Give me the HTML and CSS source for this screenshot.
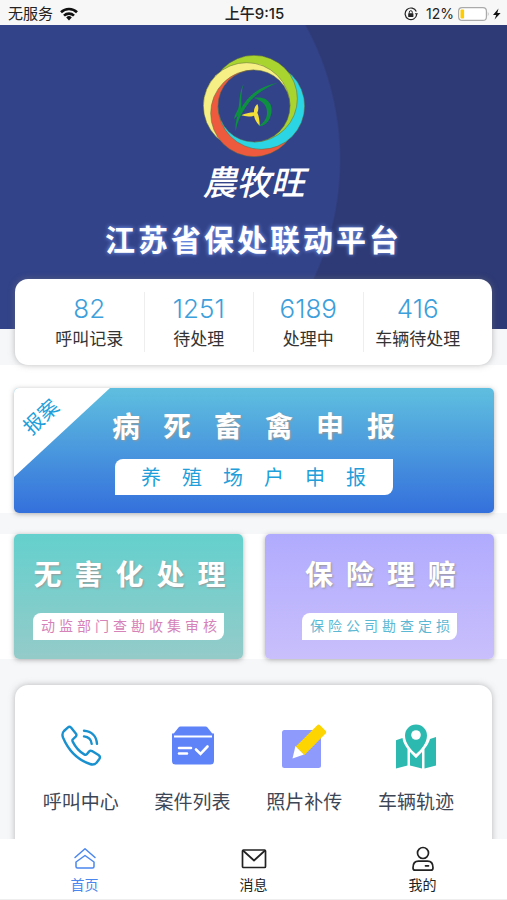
FILE: index.html
```
<!DOCTYPE html>
<html lang="zh-CN">
<head>
    <meta charset="utf-8">
    <meta name="viewport" content="width=device-width, initial-scale=1">
    <title>江苏省保处联动平台</title>
    <link rel="stylesheet" href="styles.css">
</head>

<body>
<div class="status">
    <div class="status-left">
        <span>无服务</span>
        <svg width="18" height="14" viewBox="0 0 18 14">
            <g fill="none" stroke="#111" stroke-width="2.6">
                <path d="M1 5.3a11.4 11.4 0 0 1 16 0"/>
                <path d="M4 8.6a7.2 7.2 0 0 1 10 0"/>
            </g>
            <path d="M9 13.4l-2.8-3a4 4 0 0 1 5.6 0z" fill="#111"/>
        </svg>
    </div>
    <div class="status-time">上午9:15</div>
    <div class="status-right">
        <svg width="14" height="14" viewBox="0 0 14 14">
            <path d="M12.7 7.5A5.8 5.8 0 1 1 12.3 4.6" fill="none" stroke="#222" stroke-width="1.2"/>
            <path d="M10.8 6.2h3.2l-1.5 2.3z" fill="#222"/>
            <rect x="4.2" y="6.3" width="5.2" height="3.8" rx=".5" fill="#222"/>
            <path d="M5.3 6.5V5.2a1.500 1.500 0 0 1 3 0v1.300" fill="none" stroke="#222"/>
        </svg>
        <span class="percent">12%</span>
        <svg width="43" height="14" viewBox="0 0 43 14">
            <rect x=".6" y=".6" width="27.8" height="12.8" rx="3.5" fill="#fff" stroke="#aaa" stroke-width="1.2"/>
            <rect x="2.5" y="2.5" width="3.6" height="9" rx="1" fill="#fc0"/>
            <path d="M29.8 4.6q1.6 2.4 0 4.8z" fill="#aaa"/>
            <path d="M40.5 1.5L35 8h3.2L36.6 12.6 42.6 6h-3.3z" fill="#111"/>
        </svg>
    </div>
</div>

<main class="content">
    <div class="hero">
        <svg class="logo" width="102" height="102" viewBox="0 0 306 306">
            <defs>
                <clipPath id="top"><rect width="306" height="153"/></clipPath>
                <clipPath id="topleft"><rect width="153" height="153"/></clipPath>
                <clipPath id="topright"><path d="M0 0h306v306H153V153H0z"/></clipPath>
            </defs>
            <g stroke="#5c6b3c" stroke-width="1.5">
                <circle cx="131" cy="153" r="130" fill="#f6ef86"/>
                <circle cx="153" cy="175" r="130" fill="#ee5a3d"/>
                <circle cx="175" cy="153" r="130" fill="#2bd5e4"/>
                <circle cx="153" cy="131" r="130" fill="#a9d42f" clip-path="url(#topright)"/>
                <circle cx="131" cy="153" r="130" fill="#f6ef86" clip-path="url(#top)"/>
                <circle cx="153" cy="175" r="130" fill="#ee5a3d" clip-path="url(#topleft)"/>
                <circle cx="153" cy="153" r="108" fill="#334389"/>
            </g>
            <g transform="translate(-39 -31)">
                <path d="M161 117c-12 22-12 48-14 64-2 18-12 24-15 42 12-10 20-18 22-36 1-22-2-44 7-70z" fill="#0d9040"/>
                <path d="M137 260c-2-30 6-58 26-84 24-34 56-53 101-62-40 16-68 34-90 64-20 27-32 52-37 82z" fill="#0d9040"/>
                <path d="M192 160c45-8 64 27 47 62-9 16-21 24-35 22 15-6 25-19 27-36 2-26-14-40-39-48z" fill="#0d9040"/>
                <path d="M192 203c-1-11 4-19 10-25 4 8 4 17 0 26 5 9 7 26 7 39-9-9-15-19-17-30-12 4-26 3-38-1 12-5 24-8 38-9z" fill="#f3df3a"/>
            </g>
        </svg>
        <div class="brand">農牧旺</div>
        <h1>江苏省保处联动平台</h1>
    </div>

    <div class="stats-band">
        <div class="stats">
            <div class="stat"><strong>82</strong><span>呼叫记录</span></div>
            <div class="stat"><strong>1251</strong><span>待处理</span></div>
            <div class="stat"><strong>6189</strong><span>处理中</span></div>
            <div class="stat"><strong>416</strong><span>车辆待处理</span></div>
        </div>
    </div>

    <div class="row report-row">
        <button class="card report" type="button">
            <span class="corner"><span>报案</span></span>
            <span class="card-title">病死畜禽申报</span>
            <span class="pill">养殖场户申报</span>
        </button>
    </div>

    <div class="row pair">
        <button class="card harmless" type="button">
            <span class="card-title">无害化处理</span>
            <span class="pill">动监部门查勘收集审核</span>
        </button>
        <button class="card insurance" type="button">
            <span class="card-title">保险理赔</span>
            <span class="pill">保险公司勘查定损</span>
        </button>
    </div>

    <div class="menu">
        <a href="#">
            <svg width="44" height="44" viewBox="0 0 44 44" fill="none" stroke="#1a91cf" stroke-width="2.4" stroke-linecap="round" stroke-linejoin="round">
                <path d="M9 3.3q1.500-1.300 3 .2l5 6.200q1 1.500-.3 2.900l-3 2.900q-.6.900 0 2.100 4.300 8.600 11.500 12.800 1.600.9 2.600-.2l2.400-2.800q1.200-1.200 2.800-.3l6.500 4q2.300 1.600 1 3.600l-3 4q-2.500 2.700-6.500 1.300C18.500 35.800 9.500 26.500 4 13.500q-1.500-4 1-6.500z"/>
                <path d="M25 6.700c7.500.5 12.500 5.500 13 13.200M25 12.400c4.500.5 7.200 3.200 7.700 7.500"/>
            </svg>
            <span>呼叫中心</span>
        </a>
        <a href="#">
            <svg width="44" height="44" viewBox="0 0 44 44">
                <path d="M9.500 2.500h25q1.300 0 2 .9l5.500 7H2l5.500-7q.7-.9 2-.9z" fill="#5e82f8"/>
                <path d="M1 9.500h42V37q0 3.500-3.500 3.500h-35Q1 40.500 1 37z" fill="#5e82f8"/>
                <path d="M3 12.500h38" stroke="#fff" stroke-width="2"/>
                <g fill="none" stroke="#fff" stroke-width="2.600" stroke-linecap="round">
                    <path d="M8 24h12M8 29.500h8M25 25.500l4.500 4.500 7-7.500"/>
                </g>
            </svg>
            <span>案件列表</span>
        </a>
        <a href="#">
            <svg width="46" height="46" viewBox="0 0 46 46">
                <rect x="1" y="7" width="39" height="38" rx="2.500" fill="#8f9bfc"/>
                <path d="M14.500 23l8.500 8.500-11.500 4z" fill="#fff"/>
                <path d="M14.800 23.500L36.500 2q1.200-1 2.300 0l6 6q1 1.100 0 2.200L23.500 32z" fill="#fdd500"/>
            </svg>
            <span>照片补传</span>
        </a>
        <a href="#">
            <svg width="44" height="46" viewBox="0 0 44 46" fill="#2cb9b0">
                <path d="M22 1.500a11 11 0 0 1 11 11c0 7.500-6 14.500-11 18.500-5-4-11-11-11-18.500a11 11 0 0 1 11-11z"/>
                <circle cx="22" cy="12" r="4.800" fill="#fff"/>
                <path d="M2 17.200l6.500-2.300Q9 20 13.500 26v16.500L2 45.500zM16 29l6 6.200 6-6.200v16.500l-12-3zM30.500 26Q35 20.500 36 16l6-2v28.500l-11.500 3z"/>
            </svg>
            <span>车辆轨迹</span>
        </a>
    </div>
</main>

<nav class="tabbar">
    <a class="active" href="#">
        <svg width="24" height="24" viewBox="0 0 24 24" fill="none" stroke="currentColor" stroke-width="1.500" stroke-linejoin="round" stroke-linecap="round">
            <path d="M2 10.500l10-8.800 10 8.800"/>
            <path d="M12 8.500l9 6.500v4.500q0 1.500-1.500 1.500h-15Q3 21 3 19.500V15z"/>
        </svg>
        <span>首页</span>
    </a>
    <a href="#">
        <svg width="26" height="24" viewBox="0 0 26 24" fill="none" stroke="currentColor" stroke-width="1.700" stroke-linejoin="round">
            <rect x="1.500" y="3" width="23" height="17.500" rx="1"/>
            <path d="M2 3.500l11 10 11-10"/>
        </svg>
        <span>消息</span>
    </a>
    <a href="#">
        <svg width="24" height="26" viewBox="0 0 24 26" fill="none" stroke="currentColor" stroke-width="1.700" stroke-linecap="round">
            <circle cx="12" cy="7" r="5.500"/>
            <path d="M7.500 15.200h9q5.500 0 5.500 6.500 0 2.500-2 2.500H4q-2 0-2-2.500 0-6.500 5.500-6.500zM14.500 19.800h3"/>
        </svg>
        <span>我的</span>
    </a>
</nav>
</body>

</html>
```

FILE: styles.css
```
*{
    margin: 0;
    padding: 0;
    box-sizing: border-box;
}
body{
    display: flex;
    flex-direction: column;
    height: 100vh;
    background: #f6f7f9;
    font-family: "Liberation Sans", "Noto Sans CJK SC", sans-serif;
    color: #333;
}
a{
    color: inherit;
    text-decoration: none;
}
svg{
    display: block;
}
button{
    border: 0;
    font: inherit;
    cursor: pointer;
}

/* status bar */
.status{
    display: grid;
    grid-template-columns: 1fr auto 1fr;
    align-items: center;
    flex: none;
    height: 25px;
    padding: 2px 6px 0 8px;
    background: #f7f7f7;
    font-family: Inter, "Noto Sans CJK SC", sans-serif;
    font-size: 15px;
    line-height: 22px;
    color: #222;
}
.status-left, .status-right{
    display: flex;
    align-items: center;
    gap: 7px;
}
.status-right{
    justify-content: flex-end;
    gap: 4px;
}
.status-time{
    font-weight: 500;
}
.percent{
    margin-left: 4px;
    font-size: 14px;
}

.content{
    flex: 1;
    min-height: 0;
    overflow: hidden;
}

/* hero */
.hero{
    display: flex;
    flex-direction: column;
    align-items: center;
    height: 304px;
    padding-top: 30px;
    background: radial-gradient(circle at 60px 135px, #334389 279px, #2e3a75 281px);
    color: #fff;
}
.brand{
    margin-top: 4px;
    font-size: 34px;
    font-style: italic;
    font-weight: 500;
    line-height: 44px;
}
.hero h1{
    margin-top: 14px;
    font-size: 30px;
    font-weight: 700;
    line-height: 44px;
    letter-spacing: 3px;
    text-shadow: 0 0 4px #7fa4ff;
}

/* counters */
.stats-band{
    height: 36px;
    padding: 0 15px;
}
.stats{
    position: relative;
    top: -50px;
    display: flex;
    height: 86px;
    padding: 13px 20px;
    background: #fff;
    border-radius: 13px;
    box-shadow: 0 0 6px rgba(120, 120, 120, 0.5);
}
.stat{
    flex: 1;
    display: flex;
    flex-direction: column;
    align-items: center;
    white-space: nowrap;
}
.stat + .stat{
    border-left: 1px solid #eee;
}
.stat strong{
    font-family: Inter, "Liberation Sans", sans-serif;
    font-size: 26px;
    font-weight: 300;
    line-height: 34px;
    color: #3d9fdb;
}
.stat span{
    font-size: 17px;
    line-height: 28px;
}

/* cards */
.row{
    display: flex;
    gap: 22px;
    padding: 0 13px 0 14px;
    background: #fff;
}
.report-row{
    padding-top: 23px;
}
.pair{
    margin-top: 21px;
}
.card{
    position: relative;
    flex: 1;
    display: flex;
    flex-direction: column;
    align-items: center;
    overflow: hidden;
    height: 125px;
    border-radius: 5px;
    box-shadow: 0 1px 5px rgba(100, 100, 100, 0.5);
    white-space: nowrap;
}
.card-title{
    font-size: 28px;
    font-weight: 700;
    line-height: 40px;
    letter-spacing: 13px;
    color: #fff;
    text-shadow: 1px 1px 2px #999;
}
.pill{
    background: #fff;
    border-radius: 8px 0 8px 0;
    font-size: 14px;
    line-height: 27px;
    letter-spacing: 4px;
    padding: 0 3px 0 8px;
}
.report{
    padding-top: 20px;
    background: linear-gradient(#5fbfdf, #3470dc);
}
.report .card-title{
    padding-left: 22px;
    letter-spacing: 23px;
}
.report .pill{
    margin-top: 11px;
    padding: 2px 6px 0 26px;
    font-size: 20px;
    line-height: 34px;
    letter-spacing: 21px;
    color: #229fda;
}
.corner{
    position: absolute;
    top: 0;
    left: 0;
    width: 96px;
    height: 89px;
    background: #fff;
    clip-path: polygon(0 0, 100% 0, 0 100%);
}
.corner span{
    position: absolute;
    top: 15px;
    left: 7px;
    font-size: 20px;
    line-height: 28px;
    color: #229fda;
    transform: rotate(-43deg);
}
.harmless, .insurance{
    padding-top: 22px;
}
.harmless .pill, .insurance .pill{
    margin-top: 17px;
}
.harmless{
    background: linear-gradient(#64d0cd, #94cbc9);
}
.harmless .card-title, .insurance .card-title{
    padding-left: 15px;
}
.harmless .pill{
    color: #d583b9;
}
.insurance{
    background: linear-gradient(#b1abfe, #c9bffc);
}
.insurance .pill{
    color: #5db8d3;
}

/* menu */
.menu{
    display: flex;
    height: 180px;
    margin: 26px 15px 0;
    padding: 38px 20px 0 10px;
    background: #fff;
    border-radius: 13px;
    box-shadow: 0 0 6px rgba(120, 120, 120, 0.5);
}
.menu a{
    flex: 1;
    display: flex;
    flex-direction: column;
    align-items: center;
    font-size: 19px;
    line-height: 28px;
    color: #3c4655;
}
.menu svg{
    height: 46px;
    margin-bottom: 20px;
}

/* tab bar */
.tabbar{
    display: flex;
    flex: none;
    height: 61px;
    padding-top: 7px;
    background: #fff;
    border-bottom: 1px solid #eee;
}
.tabbar a{
    flex: 1;
    display: flex;
    flex-direction: column;
    align-items: center;
    font-size: 14px;
    line-height: 20px;
    color: #222;
}
.tabbar svg{
    height: 26px;
    margin-bottom: 3px;
}
.tabbar .active{
    color: #4a86ee;
}
```
